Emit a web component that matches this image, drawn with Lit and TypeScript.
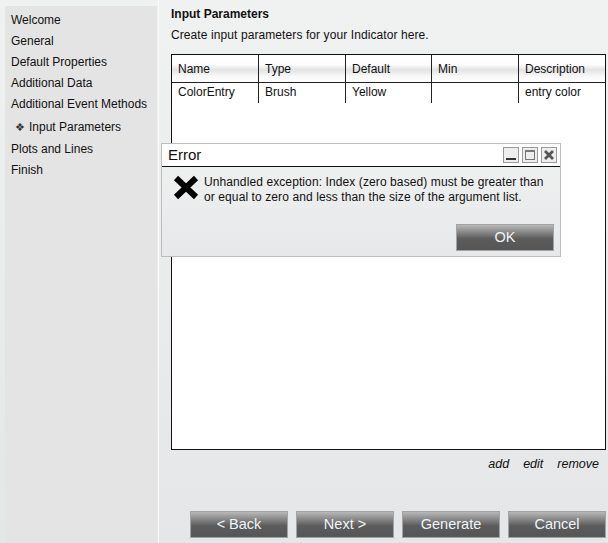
import { LitElement, html, css } from "lit";
import { customElement } from "lit/decorators.js";

const steps = ["Welcome", "General", "Default Properties", "Additional Data", "Additional Event Methods"];
const cols = ["Name", "Type", "Default", "Min", "Description"];
const row = ["ColorEntry", "Brush", "Yellow", "", "entry color"];

@customElement("app-root")
export class AppRoot extends LitElement {
  static styles = css`
    :host { display: block; width: 608px; height: 543px; position: relative; overflow: hidden;
      font-family: "Liberation Sans", Arial, sans-serif; font-size: 12px; color: #111;
      background: linear-gradient(#f0f1f1, #e5e6e7); }
    .page { display: flex; height: 543px; box-sizing: border-box; padding: 6px 0 0 5px; }
    .side { width: 152px; flex: none; background: #e4e4e4; padding-top: 4px; box-sizing: border-box; }
    .step { height: 21px; line-height: 21px; padding-left: 6px; white-space: nowrap; }
    .step.cur { padding-left: 10px; height: 23px; line-height: 23px; margin-top: 1px; }
    .diamond { font-size: 11px; display: inline-block; width: 14px; color: #333; }
    .rule { width: 1px; flex: none; margin-left: 1px; background: #fafafa; margin-top: -6px; }
    .main { flex: 1; padding: 0 2px 0 12px; display: flex; flex-direction: column; min-width: 0; margin-top: -6px; }
    h1 { margin: 0; font-size: 12px; line-height: 14px; padding-top: 7px; font-weight: bold; }
    .sub { line-height: 14px; margin-top: 7px; letter-spacing: 0.09px; }
    .table { margin-top: 12px; height: 396px; box-sizing: border-box; border: 1px solid #111; background: #fff; }
    .tr { display: grid; grid-template-columns: 87px 87px 86px 87px 1fr; }
    .th { height: 27px; line-height: 29px; padding-left: 6px; border-bottom: 1px solid #222; border-right: 1px solid #222; box-sizing: content-box;
      background: linear-gradient(#fff 0, #fdfdfd 35%, #e3e3e3 55%, #f9f9f9 80%, #fff 100%); }
    .td { height: 20px; line-height: 19px; padding-left: 6px; border-right: 1px solid #222; }
    .th:last-child, .td:last-child { border-right: 0; }
    .links { display: flex; justify-content: flex-end; gap: 14px; font-style: italic; font-size: 12.5px; padding: 7px 7px 0 0; line-height: 14px; }
    .actions { display: flex; justify-content: flex-end; gap: 8px; margin-top: 40px; }
    .btn { width: 98px; height: 27px; box-sizing: border-box; border: 1px solid #a3a3a3; color: #f0f4f8; font: 14.5px/23px "Liberation Sans", Arial, sans-serif; text-align: center;
      background: linear-gradient(#b8b8b8, #5c5c5c 55%, #555 100%); padding: 0; }
    .dialog { position: absolute; left: 161px; top: 143px; width: 400px; height: 114px; box-sizing: border-box; border: 1px solid #bdbdbd;
      background: linear-gradient(#f0f1f1, #e7e8e9); display: flex; flex-direction: column; }
    .title { height: 22px; flex: none; background: #fff; border-bottom: 1px solid #111; display: flex; align-items: center; padding: 0 3px 0 6px; box-sizing: content-box; }
    .title span { font-size: 15px; flex: 1; line-height: 22px; }
    .wb { width: 16px; height: 16px; margin-left: 3px; box-sizing: border-box; border: 1px solid #9a9a9a; background: #eeeeee; display: block; padding: 0; }
    .body { display: flex; padding: 8px 0 0 11px; }
    .x { width: 26px; height: 26px; flex: none; }
    .msg { margin-left: 5px; line-height: 15px; width: 345px; letter-spacing: 0.1px; }
    .foot { display: flex; justify-content: flex-end; padding: 19px 6px 0 0; }
  `;

  render() {
    return html`
      <div class="page">
        <nav class="side">
          ${steps.map((s) => html`<div class="step">${s}</div>`)}
          <div class="step cur"><span class="diamond">❖</span>Input Parameters</div>
          <div class="step">Plots and Lines</div>
          <div class="step">Finish</div>
        </nav>
        <div class="rule"></div>
        <main class="main">
          <h1>Input Parameters</h1>
          <div class="sub">Create input parameters for your Indicator here.</div>
          <div class="table">
            <div class="tr">${cols.map((c) => html`<div class="th">${c}</div>`)}</div>
            <div class="tr">${row.map((c) => html`<div class="td">${c}</div>`)}</div>
          </div>
          <div class="links"><span>add</span><span>edit</span><span>remove</span></div>
          <div class="actions">
            <button class="btn">&lt; Back</button>
            <button class="btn">Next &gt;</button>
            <button class="btn">Generate</button>
            <button class="btn">Cancel</button>
          </div>
        </main>
      </div>
      <div class="dialog">
        <div class="title">
          <span>Error</span>
          <svg class="wb" viewBox="0 0 14 14"><rect x="2" y="10" width="10" height="2" fill="#333"/></svg>
          <svg class="wb" viewBox="0 0 14 14"><rect x="2.5" y="2.5" width="9" height="9" fill="none" stroke="#777"/><rect x="2" y="2" width="10" height="2" fill="#777"/></svg>
          <svg class="wb" viewBox="0 0 14 14"><path d="M3 3L11 11M11 3L3 11" stroke="#555" stroke-width="2.8"/></svg>
        </div>
        <div class="body">
          <svg class="x" viewBox="0 0 26 26"><path d="M3 3L23 22M23 3L3 22" stroke="#000" stroke-width="6"/></svg>
          <div class="msg">Unhandled exception: Index (zero based) must be greater than or equal to zero and less than the size of the argument list.</div>
        </div>
        <div class="foot"><button class="btn">OK</button></div>
      </div>
    `;
  }
}
